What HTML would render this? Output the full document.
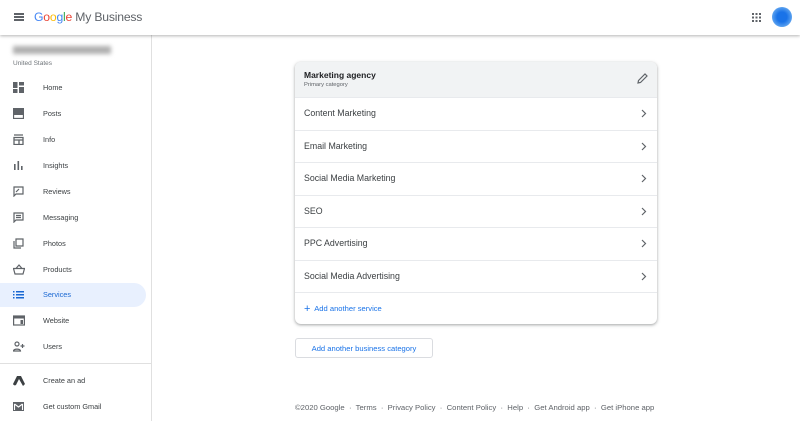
<!DOCTYPE html>
<html><head><style>
*{margin:0;padding:0;box-sizing:border-box}
body{width:800px;height:421px;overflow:hidden;background:#fff;font-family:"Liberation Sans",Arial,sans-serif;position:relative;color:#3c4043}
.hdr{position:absolute;left:0;top:0;width:800px;height:35px;background:#fff;box-shadow:0 1px 3px rgba(0,0,0,.3);z-index:2}
.side{position:absolute;left:0;top:35px;width:152px;height:386px;border-right:1px solid #e0e0e0}
.nav{position:absolute;left:0;width:146px;height:24px;font-size:7.3px;color:#3c4043;line-height:24px}
.nav span{position:absolute;left:43px}
.nav svg{position:absolute;left:13px;top:6px}
.card{position:absolute;left:295px;top:62px;width:362px;height:262px;border-radius:6px;box-shadow:0 1px 2px rgba(60,64,67,.3),0 1px 3px 1px rgba(60,64,67,.15);overflow:hidden}
.row{position:absolute;left:0;width:362px;height:32.5px;border-top:1px solid #e8eaed;font-size:8.8px;line-height:31px;padding-left:9px;color:#3c4043}
.row svg{position:absolute;right:10px;top:11px}
</style></head><body>
<div class="hdr">
<div style="position:absolute;left:14px;top:13px;width:10px;height:1.5px;background:#5f6368;box-shadow:0 3px 0 #5f6368,0 6px 0 #5f6368"></div>
<div style="position:absolute;left:34px;top:10px;font-size:12.2px;letter-spacing:-.2px"><span style="color:#4285f4">G</span><span style="color:#ea4335">o</span><span style="color:#fbbc05">o</span><span style="color:#4285f4">g</span><span style="color:#34a853">l</span><span style="color:#ea4335">e</span><span style="color:#5f6368"> My Business</span></div>
<svg style="position:absolute;left:752px;top:13px" width="9" height="9" viewBox="0 0 9 9" fill="#5f6368"><rect x="0" y="0" width="2" height="2"/><rect x="3.5" y="0" width="2" height="2"/><rect x="7" y="0" width="2" height="2"/><rect x="0" y="3.5" width="2" height="2"/><rect x="3.5" y="3.5" width="2" height="2"/><rect x="7" y="3.5" width="2" height="2"/><rect x="0" y="7" width="2" height="2"/><rect x="3.5" y="7" width="2" height="2"/><rect x="7" y="7" width="2" height="2"/></svg>
<div style="position:absolute;left:772px;top:7px;width:20px;height:20px;border-radius:50%;background:radial-gradient(circle,#1a73e8 35%,#64a8f0 75%,#e3effc)"></div>
</div>
<div class="side">
<div style="position:absolute;left:13px;top:11px;width:98px;height:8px;background:#b0b0b0;filter:blur(2px)"></div>
<div style="position:absolute;left:13px;top:25px;font-size:6.5px;color:#70757a">United States</div>
<div class="nav" style="top:41px"><svg width="11" height="11" viewBox="0 0 11 11" fill="#5f6368"><rect x="0" y="0" width="4.5" height="6"/><rect x="6" y="0" width="5" height="3.5"/><rect x="0" y="7" width="4.5" height="4"/><rect x="6" y="5" width="5" height="6"/></svg><span>Home</span></div>
<div class="nav" style="top:67px"><svg width="11" height="11" viewBox="0 0 11 11"><rect x="0.5" y="0.5" width="10" height="10" fill="none" stroke="#5f6368" stroke-width="1.3"/><rect x="1" y="1" width="9" height="6" fill="#5f6368"/></svg><span>Posts</span></div>
<div class="nav" style="top:93px"><svg width="11" height="11" viewBox="0 0 11 11" fill="none" stroke="#5f6368" stroke-width="1.3"><path d="M1 1h9M1 3.5h9v7H1zM1 6h9M6 6v4.5"/></svg><span>Info</span></div>
<div class="nav" style="top:119px"><svg width="11" height="11" viewBox="0 0 11 11" fill="#5f6368"><rect x="1" y="4" width="1.6" height="6"/><rect x="4.5" y="1" width="1.6" height="9"/><rect x="8" y="6" width="1.6" height="4"/></svg><span>Insights</span></div>
<div class="nav" style="top:145px"><svg width="11" height="11" viewBox="0 0 11 11" fill="none" stroke="#5f6368" stroke-width="1.2"><path d="M1 1h9v7H3l-2 2z M3 6l3-3"/></svg><span>Reviews</span></div>
<div class="nav" style="top:171px"><svg width="11" height="11" viewBox="0 0 11 11" fill="none" stroke="#5f6368" stroke-width="1.2"><path d="M1 1h9v7H3l-2 2z M3 3.5h5M3 5.5h5"/></svg><span>Messaging</span></div>
<div class="nav" style="top:197px"><svg width="11" height="11" viewBox="0 0 11 11" fill="none" stroke="#5f6368" stroke-width="1.2"><path d="M3 1h7v7H3zM1 3v7h7"/></svg><span>Photos</span></div>
<div class="nav" style="top:223px"><svg width="12" height="11" viewBox="0 0 12 11" fill="none" stroke="#5f6368" stroke-width="1.2"><path d="M0.5 4.5h11l-1.5 5.5H2z M3 4.5L6 1l3 3.5"/></svg><span>Products</span></div>
<div class="nav" style="top:248px;background:#e8f0fe;border-radius:0 12px 12px 0;color:#1967d2"><svg width="11" height="11" viewBox="0 0 11 11" fill="#1967d2"><rect x="0" y="2" width="1.5" height="1.5"/><rect x="3" y="2" width="8" height="1.5"/><rect x="0" y="5" width="1.5" height="1.5"/><rect x="3" y="5" width="8" height="1.5"/><rect x="0" y="8" width="1.5" height="1.5"/><rect x="3" y="8" width="8" height="1.5"/></svg><span>Services</span></div>
<div class="nav" style="top:274px"><svg width="12" height="11" viewBox="0 0 12 11"><rect x="0.6" y="1" width="10.8" height="9" fill="none" stroke="#5f6368" stroke-width="1.2"/><rect x="1" y="1" width="10" height="2.5" fill="#5f6368"/><rect x="7.5" y="5" width="2.5" height="4" fill="#5f6368"/></svg><span>Website</span></div>
<div class="nav" style="top:300px"><svg width="12" height="11" viewBox="0 0 12 11" fill="none" stroke="#5f6368" stroke-width="1.2"><circle cx="4" cy="3" r="2"/><path d="M0.5 10c0-2.5 7-2.5 7 0zM9.5 3v4M7.5 5h4"/></svg><span>Users</span></div>
<div style="position:absolute;left:0;top:328px;width:151px;border-top:1px solid #e0e0e0"></div>
<div class="nav" style="top:334px"><svg width="12" height="11" viewBox="0 0 12 11" fill="#3c4043"><path d="M4 1h4l4 8-2 2-4-7-3 6a2 2 0 01-3-1z"/></svg><span>Create an ad</span></div>
<div class="nav" style="top:360px"><svg width="11" height="11" viewBox="0 0 11 11"><rect x="0" y="1" width="11" height="9" fill="#5f6368"/><path d="M1.5 3v6M9.5 3v6M1.5 3l4 3 4-3" stroke="#fff" stroke-width="1.1" fill="none"/></svg><span>Get custom Gmail</span></div>
</div>
<div class="card">
<div style="position:absolute;left:0;top:0;width:362px;height:35px;background:#f1f3f4"></div>
<div style="position:absolute;left:9px;top:8px;font-size:8.5px;font-weight:bold;color:#202124">Marketing agency</div>
<div style="position:absolute;left:9px;top:20px;font-size:5.8px;color:#5f6368">Primary category</div>
<svg style="position:absolute;left:342px;top:11px" width="11" height="11" viewBox="0 0 11 11" fill="none" stroke="#5f6368" stroke-width="1.2"><path d="M1 10l0.5-2.5L8 1l2 2-6.5 6.5z"/></svg>
<div class="row" style="top:35px">Content Marketing<svg width="6" height="9" viewBox="0 0 6 9"><path d="M1 1l3.5 3.5L1 8" stroke="#5f6368" stroke-width="1.2" fill="none"/></svg></div>
<div class="row" style="top:67.5px">Email Marketing<svg width="6" height="9" viewBox="0 0 6 9"><path d="M1 1l3.5 3.5L1 8" stroke="#5f6368" stroke-width="1.2" fill="none"/></svg></div>
<div class="row" style="top:100px">Social Media Marketing<svg width="6" height="9" viewBox="0 0 6 9"><path d="M1 1l3.5 3.5L1 8" stroke="#5f6368" stroke-width="1.2" fill="none"/></svg></div>
<div class="row" style="top:132.5px">SEO<svg width="6" height="9" viewBox="0 0 6 9"><path d="M1 1l3.5 3.5L1 8" stroke="#5f6368" stroke-width="1.2" fill="none"/></svg></div>
<div class="row" style="top:165px">PPC Advertising<svg width="6" height="9" viewBox="0 0 6 9"><path d="M1 1l3.5 3.5L1 8" stroke="#5f6368" stroke-width="1.2" fill="none"/></svg></div>
<div class="row" style="top:197.5px">Social Media Advertising<svg width="6" height="9" viewBox="0 0 6 9"><path d="M1 1l3.5 3.5L1 8" stroke="#5f6368" stroke-width="1.2" fill="none"/></svg></div>
<div class="row" style="top:230px;color:#1a73e8;font-size:7.6px"><span style="font-size:11px;position:relative;top:1px">+</span>&nbsp; Add another service</div>
</div>
<div style="position:absolute;left:295px;top:338px;width:138px;height:20px;border:1px solid #dadce0;border-radius:3px;font-size:7.6px;color:#1a73e8;display:flex;align-items:center;justify-content:center">Add another business category</div>
<div style="position:absolute;left:295px;top:403px;font-size:7.7px;color:#5f6368;white-space:nowrap">©2020 Google &nbsp;·&nbsp; Terms &nbsp;·&nbsp; Privacy Policy &nbsp;·&nbsp; Content Policy &nbsp;·&nbsp; Help &nbsp;·&nbsp; Get Android app &nbsp;·&nbsp; Get iPhone app</div>
</body></html>
